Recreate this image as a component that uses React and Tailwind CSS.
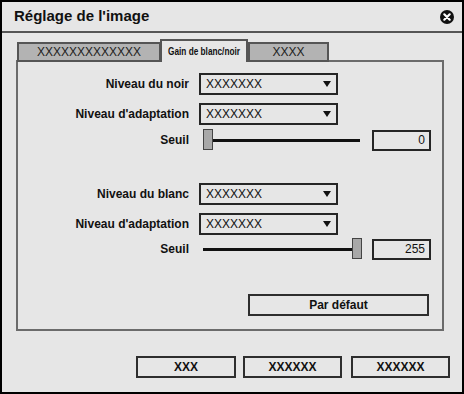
import React from "react";

const font = "font-['Liberation_Sans',Arial,Helvetica,sans-serif]";

const Arrow = () => (
    <svg width="8" height="6" viewBox="0 0 8 6" className="shrink-0">
        <path d="M0 0 H8 L4 6 Z" fill="#111" />
    </svg>
);

const Select = ({ value }) => (
    <div className="w-[139px] h-[22px] border-2 border-[#262626] bg-[#e6e6e6] flex items-center justify-between pl-[5px] pr-[5px] text-[12px] text-[#111]">
        <span>{value}</span>
        <Arrow />
    </div>
);

const Label = ({ children }) => (
    <div className="w-[171px] text-right text-[12px] font-bold text-[#111] pr-0">{children}</div>
);

const Row = ({ label, children, className = "" }) => (
    <div className={`flex items-center gap-[10px] ${className}`}>
        <Label>{label}</Label>
        {children}
    </div>
);

const Slider = ({ value }) => {
    const left = (value / 255) * 149;
    return (
        <div className="relative ml-[4px] w-[159px] h-[22px] flex items-center">
            <div className="w-[157px] h-[3px] bg-[#111]" />
            <div
                className="absolute top-0 w-[10px] h-[21px] bg-[#a8a8a8] border border-[#444]"
                style={{ left }}
            />
        </div>
    );
};

const NumBox = ({ value }) => (
    <div className="w-[59px] h-[21px] border-2 border-[#262626] bg-[#e6e6e6] flex items-center justify-end pr-[4px] text-[12px] text-[#111]">
        {value}
    </div>
);

const Button = ({ children, className = "" }) => (
    <div className={`h-[22px] border-2 border-[#2e2e2e] bg-[#e6e6e6] flex items-center justify-center text-[12px] font-bold text-[#111] ${className}`}>
        {children}
    </div>
);

export default function App() {
    return (
        <div className={`w-[464px] h-[394px] border-2 border-black bg-[#e6e6e6] flex flex-col ${font}`}>
            {/* Title */}
            <div className="h-[31px] border-b-2 border-[#555] flex items-center justify-between pl-[12px] pr-[8px]">
                <span className="text-[15px] font-bold text-[#111]">Réglage de l'image</span>
                <svg width="14" height="14" viewBox="0 0 14 14">
                    <circle cx="7" cy="7" r="7" fill="#111" />
                    <path d="M4.3 4.3 L9.7 9.7 M9.7 4.3 L4.3 9.7" stroke="#fff" strokeWidth="2.2" strokeLinecap="round" />
                </svg>
            </div>

            {/* Tabs */}
            <div className="ml-[15px] mt-[6px] flex items-end relative z-10 -mb-[2px]">
                <div className="w-[144px] h-[20px] border-2 border-[#555] bg-[#b3b3b3] flex items-center justify-center text-[12px] text-[#222]">
                    XXXXXXXXXXXXX
                </div>
                <div className="w-[88px] h-[23px] border-2 border-b-0 border-[#555] bg-[#e6e6e6] -ml-[1px] flex items-center justify-center overflow-hidden">
                    <span className="inline-block scale-x-75 text-[11px] font-bold text-[#111] whitespace-nowrap pb-[1px]">Gain de blanc/noir</span>
                </div>
                <div className="w-[81px] h-[20px] border-2 border-[#555] bg-[#b3b3b3] flex items-center justify-center text-[12px] text-[#222]">
                    XXXX
                </div>
            </div>

            {/* Panel */}
            <div className="ml-[14px] w-[428px] h-[271px] border-2 border-[#6b6b6b] flex flex-col pt-[11px]">
                <Row label="Niveau du noir"><Select value="XXXXXXX" /></Row>
                <Row label="Niveau d'adaptation" className="mt-[8px]"><Select value="XXXXXXX" /></Row>
                <Row label="Seuil" className="mt-[4px]">
                    <Slider value={0} />
                    <NumBox value="0" />
                </Row>

                <Row label="Niveau du blanc" className="mt-[32px]"><Select value="XXXXXXX" /></Row>
                <Row label="Niveau d'adaptation" className="mt-[8px]"><Select value="XXXXXXX" /></Row>
                <Row label="Seuil" className="mt-[3px]">
                    <Slider value={255} />
                    <NumBox value="255" />
                </Row>

                <div className="flex justify-end mt-[34px] pr-[13px]">
                    <Button className="w-[181px]">Par défaut</Button>
                </div>
            </div>

            {/* Footer */}
            <div className="flex justify-end gap-[7px] mt-[25px] pr-[12px]">
                <Button className="w-[100px]">XXX</Button>
                <Button className="w-[99px]">XXXXXX</Button>
                <Button className="w-[99px] ml-[2px]">XXXXXX</Button>
            </div>
        </div>
    );
}
